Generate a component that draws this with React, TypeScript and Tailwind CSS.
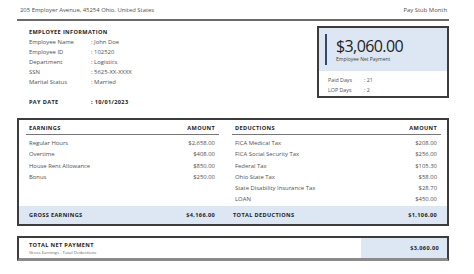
import React from "react";

const font = { fontFamily: '"Open Sans", "Noto Sans", sans-serif' };

const earnings = [
  ["Regular Hours", "$2,658.00"],
  ["Overtime", "$408.00"],
  ["House Rent Allowance", "$850.00"],
  ["Bonus", "$250.00"],
];
const deductions = [
  ["FICA Medical Tax", "$208.00"],
  ["FICA Social Security Tax", "$256.00"],
  ["Federal Tax", "$105.30"],
  ["Ohio State Tax", "$58.00"],
  ["State Disability Insurance Tax", "$28.70"],
  ["LOAN", "$450.00"],
];

function Col({ title, rows }: { title: string; rows: string[][] }) {
  return (
    <div className="flex flex-col">
      <div className="flex justify-between items-center h-[13px] pl-[3px] pr-[4px] border-b-[1.5px] border-[#777] text-[5.6px] font-bold tracking-[0.35px] text-[#222]">
        <span>{title}</span>
        <span>AMOUNT</span>
      </div>
      <div className="flex flex-col pt-[3px]">
        {rows.map(([a, b]) => (
          <div key={a} className="flex justify-between items-center h-[11.2px] pl-[3px] pr-[4px] text-[5.9px] text-[#505050]">
            <span>{a}</span>
            <span>{b}</span>
          </div>
        ))}
      </div>
    </div>
  );
}

export default function App() {
  return (
    <div className="w-[474px] h-[274px] bg-white overflow-hidden" style={font}>
      <div className="pl-[17px] w-[449px]">
        <div className="flex justify-between items-center h-[19px] pl-[3px] pr-[2px] pt-[1px] text-[5.9px] text-[#505050]">
          <span>205 Employer Avenue, 45254 Ohio, United States</span>
          <span>Pay Stub Month</span>
        </div>
        <div className="h-[2px] bg-[#6a6a6a]" />
        <div className="flex justify-between items-start h-[77px] pt-[5px]">
          <div className="pl-[12px] pt-[1px] text-[5.9px]">
            <div className="h-[10px] flex items-center text-[5.6px] font-bold tracking-[0.35px] text-[#222]">EMPLOYEE INFORMATION</div>
            {[
              ["Employee Name", "John Doe"],
              ["Employee ID", "102520"],
              ["Department", "Logistics"],
              ["SSN", "5625-XX-XXXX"],
              ["Marital Status", "Married"],
            ].map(([a, b]) => (
              <div key={a} className="h-[10px] flex items-center text-[#505050]">
                <span className="w-[62px]">{a}</span>
                <span>: {b}</span>
              </div>
            ))}
            <div className="h-[10px] mt-[10.5px] flex items-center text-[5.6px] font-bold tracking-[0.35px] text-[#222]">
              <span className="w-[62px]">PAY DATE</span>
              <span>: 10/01/2023</span>
            </div>
          </div>
          <div className="w-[132px] h-[72px] border-2 border-[#3c3c3c] flex flex-col">
            <div className="h-[45px] bg-[#dce7f3] flex items-center pl-[6px]">
              <div className="w-[2px] h-[31px] bg-[#2f4a6d]" />
              <div className="pl-[9px] flex flex-col pt-[1px]">
                <span className="text-[16px] leading-[16px] tracking-[-0.6px] text-[#1e1e1e]">$3,060.00</span>
                <span className="text-[5px] leading-[7px] mt-[2px] text-[#444]">Employee Net Payment</span>
              </div>
            </div>
            <div className="pl-[9px] pt-[5px] text-[5.3px] text-[#505050]">
              <div className="h-[10px] flex items-center">
                <span className="w-[36px]">Paid Days</span>
                <span>: 21</span>
              </div>
              <div className="h-[10px] flex items-center">
                <span className="w-[36px]">LOP Days</span>
                <span>: 2</span>
              </div>
            </div>
          </div>
        </div>
        <div className="mt-[20px] h-[108px] border-2 border-[#3c3c3c] flex flex-col">
          <div className="flex-1 grid grid-cols-[193px_209px] gap-x-[13px] pl-[7px] pt-[2px]">
            <Col title="EARNINGS" rows={earnings} />
            <Col title="DEDUCTIONS" rows={deductions} />
          </div>
          <div className="h-[18px] bg-[#dce7f3] grid grid-cols-[193px_209px] gap-x-[13px] pl-[7px] text-[5.6px] font-bold tracking-[0.35px] text-[#222]">
            <div className="flex justify-between items-center pl-[3px] pr-[4px]">
              <span>GROSS EARNINGS</span>
              <span>$4,166.00</span>
            </div>
            <div className="flex justify-between items-center pl-[1px] pr-[4px]">
              <span>TOTAL DEDUCTIONS</span>
              <span>$1,106.00</span>
            </div>
          </div>
        </div>
        <div className="mt-[10px] h-[25px] border-2 border-b-[3px] border-[#3c3c3c] border-b-[#8a8a8a] flex">
          <div className="flex-1 pl-[10px] flex flex-col justify-center">
            <span className="text-[5.6px] font-bold tracking-[0.35px] text-[#222] leading-[8px]">TOTAL NET PAYMENT</span>
            <span className="text-[4.3px] text-[#666] leading-[7px]">Gross Earnings - Total Deductions</span>
          </div>
          <div className="w-[86px] bg-[#dce7f3] flex items-center justify-end pr-[8px] text-[5.6px] font-bold tracking-[0.35px] text-[#222]">
            $3,060.00
          </div>
        </div>
      </div>
    </div>
  );
}
